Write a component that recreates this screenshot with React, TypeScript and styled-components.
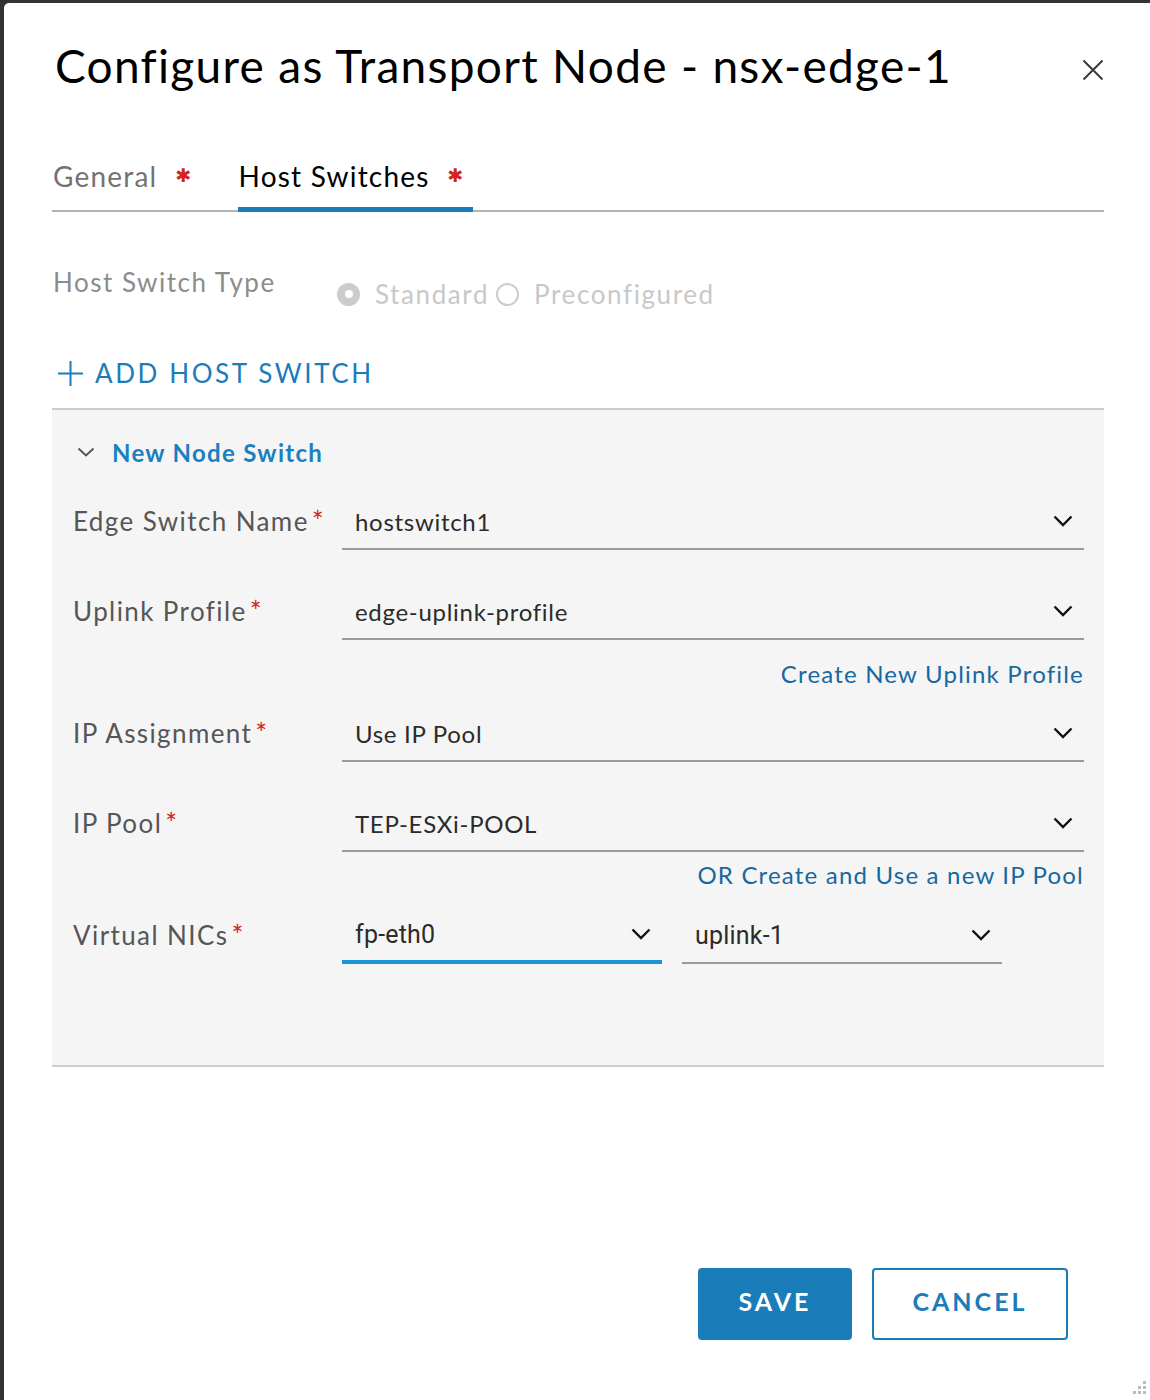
import React from "react";
import styled, { createGlobalStyle } from "styled-components";

const FONT = `"Lato", "Liberation Sans", sans-serif`;
const BLUE = "#1a7cb9";
const LINK = "#17689f";

const Global = createGlobalStyle`
  html, body { margin: 0; padding: 0; background: #333333; }
  body { font-family: ${FONT}; }
  #root { padding: 3px 0 0 4px; }
  * { box-sizing: border-box; }
`;

const Dialog = styled.div`
  position: relative;
  background: #ffffff;
  border-top-left-radius: 5px;
  min-height: 1397px;
  padding: 0 46px 0 48px;
  display: flex;
  flex-direction: column;
`;

const Header = styled.div`
  display: flex;
  align-items: center;
  justify-content: space-between;
  padding-top: 35px;
  height: 89px;
`;

const Title = styled.h1`
  margin: 0;
  font-family: ${FONT};
  font-weight: 400;
  font-size: 46px;
  color: #000;
  padding-left: 3px;
  letter-spacing: 1.3px;
`;

const CloseBtn = styled.button`
  border: 0;
  background: none;
  padding: 0;
  width: 22px;
  height: 22px;
  margin-top: 10px;
  display: flex;
`;

const TabBar = styled.div`
  display: flex;
  margin-top: 67px;
  border-bottom: 2px solid #b3b3b3;
  gap: 37px;
`;

const Tab = styled.div<{ $active?: boolean }>`
  display: flex;
  align-items: flex-start;
  gap: 18px;
  padding: 0 8px 14px 1px;
  margin-bottom: -2px;
  border-bottom: 5px solid ${(p) => (p.$active ? BLUE : "transparent")};
  font-size: 28px;
  color: ${(p) => (p.$active ? "#000" : "#737373")};
  letter-spacing: 1.2px;
`;

const TabStar = styled.span`
  color: #d0261b;
  font-family: "DejaVu Sans", sans-serif;
  font-size: 19px;
  line-height: 1;
  margin-top: 7px;
`;

const TypeRow = styled.div`
  display: flex;
  margin-top: 54px;
`;

const TypeLabel = styled.div`
  width: 285px;
  font-size: 26px;
  color: #8c8c8c;
  letter-spacing: 1.5px;
  padding-left: 1px;
`;

const RadioGroup = styled.div`
  display: flex;
  align-items: center;
  margin-top: 12px;
  color: #c8c8c8;
  font-size: 26px;
  letter-spacing: 1.6px;
`;

const RadioDot = styled.span<{ $checked?: boolean }>`
  width: 23px;
  height: 23px;
  border-radius: 50%;
  display: inline-flex;
  align-items: center;
  justify-content: center;
  margin-right: 15px;
  background: ${(p) => (p.$checked ? "#cccccc" : "transparent")};
  border: 2px solid #cccccc;
  &::after {
    content: "";
    width: 8px;
    height: 8px;
    border-radius: 50%;
    background: ${(p) => (p.$checked ? "#ffffff" : "transparent")};
  }
`;

const RadioText = styled.span`
  margin-right: 7px;
`;

const AddButton = styled.button`
  display: flex;
  align-items: center;
  gap: 11px;
  border: 0;
  background: none;
  padding: 0 0 0 5px;
  margin-top: 48px;
  font-family: ${FONT};
  font-size: 26px;
  letter-spacing: 2.6px;
  color: ${BLUE};
  height: 30px;
`;

const Panel = styled.section`
  margin-top: 20px;
  background: #f5f5f5;
  border-top: 2px solid #cccccc;
  border-bottom: 2px solid #cccccc;
  padding: 24px 20px 101px 21px;
`;

const PanelHeader = styled.div`
  display: flex;
  align-items: center;
  gap: 17px;
  padding-left: 4px;
  height: 36px;
  font-size: 24px;
  font-weight: 700;
  color: #1a80c0;
  letter-spacing: 1.3px;
`;

const FieldRow = styled.div<{ $gap: number }>`
  display: grid;
  grid-template-columns: 269px 1fr;
  align-items: start;
  margin-top: ${(p) => p.$gap}px;
`;

const Label = styled.div`
  font-size: 26px;
  color: #565656;
  letter-spacing: 1.4px;
  height: 46px;
  display: flex;
  align-items: center;
`;

const Req = styled.span`
  color: #d0261b;
  font-size: 28px;
  margin-left: 3px;
  align-self: flex-start;
  margin-top: 6px;
`;

const Selects = styled.div`
  display: flex;
  gap: 20px;
`;

const Select = styled.div<{ $width?: number; $focus?: boolean; $native?: boolean }>`
  display: flex;
  align-items: center;
  justify-content: space-between;
  height: 52px;
  padding: 0 11px 4px 13px;
  flex: ${(p) => (p.$width ? `0 0 ${p.$width}px` : "1")};
  border-bottom: ${(p) => (p.$focus ? "4px solid #1a96d4" : "2px solid #9a9a9a")};
  font-family: ${(p) => (p.$native ? `"Roboto", "Liberation Sans", sans-serif` : FONT)};
  font-size: ${(p) => (p.$native ? "25px" : "24px")};
  color: #2b2b2b;
  letter-spacing: ${(p) => (p.$native ? "0.2px" : "0.7px")};
`;

const LinkLine = styled.div<{ $top: number }>`
  display: flex;
  justify-content: flex-end;
  margin-top: ${(p) => p.$top}px;
  height: 30px;
  align-items: center;
`;

const Link = styled.a`
  font-size: 24px;
  color: ${LINK};
  letter-spacing: 1.2px;
  text-decoration: none;
`;

const Footer = styled.div`
  display: flex;
  justify-content: flex-end;
  gap: 20px;
  margin-top: 201px;
  padding-right: 36px;
`;

const Button = styled.button<{ $primary?: boolean }>`
  height: 72px;
  padding: 0 36px 7px;
  min-width: ${(p) => (p.$primary ? "154px" : "196px")};
  border-radius: 4px;
  border: 2px solid ${BLUE};
  background: ${(p) => (p.$primary ? BLUE : "#ffffff")};
  color: ${(p) => (p.$primary ? "#ffffff" : BLUE)};
  font-family: ${FONT};
  font-weight: 700;
  font-size: 25px;
  letter-spacing: 3px;
`;

const Grip = styled.div`
  position: absolute;
  right: 2px;
  bottom: 2px;
  width: 20px;
  height: 20px;
`;

const Chevron = ({ color = "#111" }: { color?: string }) => (
  <svg width="20" height="12" viewBox="0 0 20 12">
    <polyline points="1.5,1.5 10,10 18.5,1.5" fill="none" stroke={color} strokeWidth="2.4" />
  </svg>
);

const SelectBox = ({ value, width, focus, native }: { value: string; width?: number; focus?: boolean; native?: boolean }) => (
  <Select $width={width} $focus={focus} $native={native}>
    <span>{value}</span>
    <Chevron />
  </Select>
);

const Field = ({ label, gap, children }: { label: string; gap: number; children: React.ReactNode }) => (
  <FieldRow $gap={gap}>
    <Label>
      {label}
      <Req>*</Req>
    </Label>
    {children}
  </FieldRow>
);

export default function App() {
  return (
    <>
      <Global />
      <Dialog>
        <Header>
          <Title>Configure as Transport Node - nsx-edge-1</Title>
          <CloseBtn aria-label="close">
            <svg width="22" height="22" viewBox="0 0 22 22">
              <path d="M1.5 1.5 L20.5 20.5 M20.5 1.5 L1.5 20.5" stroke="#3a3a3a" strokeWidth="2" fill="none" />
            </svg>
          </CloseBtn>
        </Header>

        <TabBar>
          <Tab>
            General<TabStar>✱</TabStar>
          </Tab>
          <Tab $active>
            Host Switches<TabStar>✱</TabStar>
          </Tab>
        </TabBar>

        <TypeRow>
          <TypeLabel>Host Switch Type</TypeLabel>
          <RadioGroup>
            <RadioDot $checked />
            <RadioText>Standard</RadioText>
            <RadioDot />
            <RadioText>Preconfigured</RadioText>
          </RadioGroup>
        </TypeRow>

        <AddButton>
          <svg width="27" height="27" viewBox="0 0 27 27">
            <path d="M13.5 1 V26 M1 13.5 H26" stroke={BLUE} strokeWidth="2" fill="none" />
          </svg>
          ADD HOST SWITCH
        </AddButton>

        <Panel>
          <PanelHeader>
            <svg width="18" height="10" viewBox="0 0 18 10">
              <polyline points="1.5,1.5 9,8.5 16.5,1.5" fill="none" stroke="#555" strokeWidth="2" />
            </svg>
            New Node Switch
          </PanelHeader>

          <Field label="Edge Switch Name" gap={28}>
            <SelectBox value="hostswitch1" />
          </Field>
          <Field label="Uplink Profile" gap={38}>
            <SelectBox value="edge-uplink-profile" />
          </Field>
          <LinkLine $top={18}>
            <Link href="#">Create New Uplink Profile</Link>
          </LinkLine>
          <Field label="IP Assignment" gap={22}>
            <SelectBox value="Use IP Pool" />
          </Field>
          <Field label="IP Pool" gap={38}>
            <SelectBox value="TEP-ESXi-POOL" />
          </Field>
          <LinkLine $top={7}>
            <Link href="#">OR Create and Use a new IP Pool</Link>
          </LinkLine>
          <Field label="Virtual NICs" gap={23}>
            <Selects>
              <SelectBox value="fp-eth0" width={320} focus native />
              <SelectBox value="uplink-1" width={320} native />
            </Selects>
          </Field>
        </Panel>

        <Footer>
          <Button $primary>SAVE</Button>
          <Button>CANCEL</Button>
        </Footer>

        <Grip>
          <svg width="20" height="20" viewBox="0 0 20 20">
            {[
              [15, 3],
              [10, 8],
              [15, 8],
              [5, 13],
              [10, 13],
              [15, 13],
            ].map(([x, y], i) => (
              <rect key={i} x={x} y={y} width="3" height="3" fill="#bbbbbb" />
            ))}
          </svg>
        </Grip>
      </Dialog>
    </>
  );
}
